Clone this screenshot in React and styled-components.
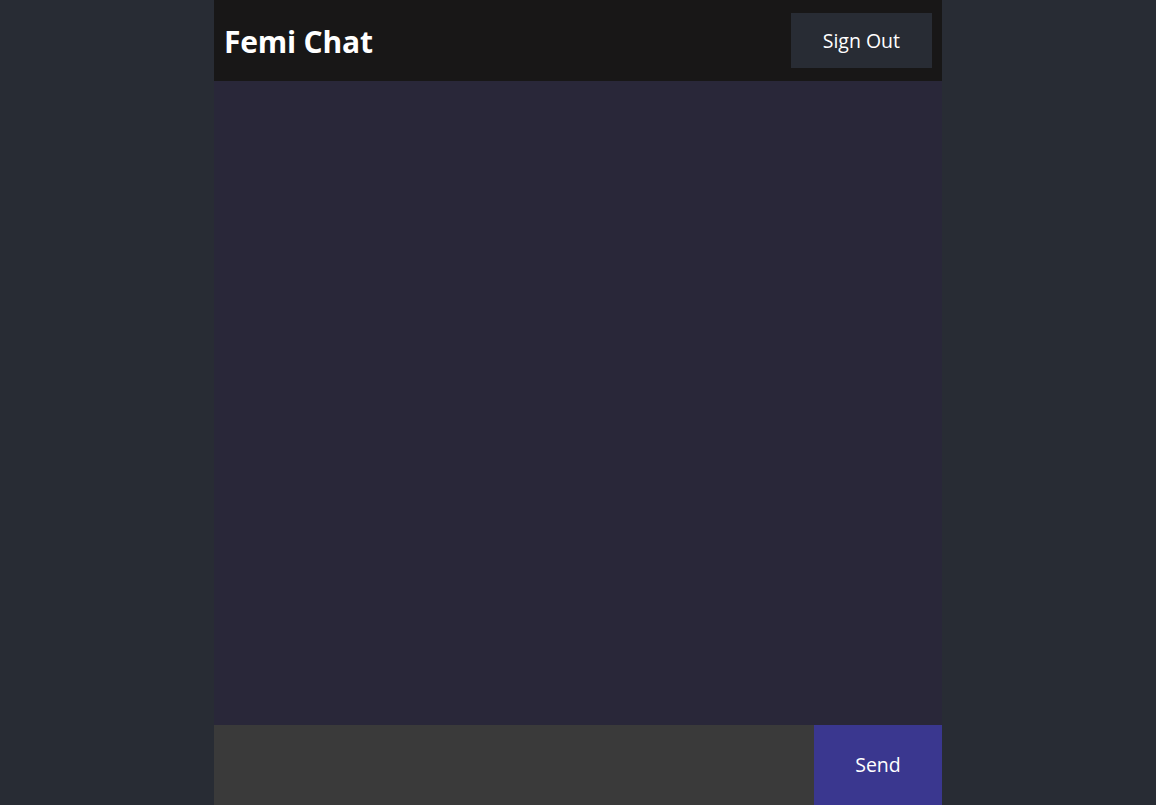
import React, { useState } from 'react';
import styled, { createGlobalStyle } from 'styled-components';

const GlobalStyle = createGlobalStyle`
  body {
    margin: 0;
    background-color: #282c34;
    font-family: "Open Sans", "Noto Sans", sans-serif;
  }
`;

const Shell = styled.div`
  max-width: 728px;
  margin: 0 auto;
  text-align: center;
`;

const Header = styled.header`
  background-color: #181717;
  height: 10vh;
  min-height: 50px;
  color: white;
  display: flex;
  align-items: center;
  justify-content: space-between;
  padding: 10px;
  box-sizing: border-box;
`;

const Title = styled.h1`
  margin: 3px 0 0;
  font-size: 30px;
  font-weight: 700;
  letter-spacing: -0.2px;
`;

const SignOutButton = styled.button`
  background-color: #282c34;
  color: white;
  border: none;
  font-family: inherit;
  font-size: 19.5px;
  padding: 14px 32px;
  cursor: pointer;
`;

const Messages = styled.main`
  height: 80vh;
  background-color: #292739;
  padding: 10px;
  box-sizing: border-box;
  overflow-y: auto;
`;

const Form = styled.form`
  height: 10vh;
  display: flex;
  background-color: #181717;
`;

const MessageInput = styled.input`
  flex: 1;
  min-width: 0;
  background-color: #3a3a3a;
  color: white;
  border: none;
  outline: none;
  font-family: inherit;
  font-size: 24px;
  padding: 0 10px;
`;

const SendButton = styled.button`
  width: 128px;
  background-color: #3a378f;
  color: white;
  border: none;
  font-family: inherit;
  font-size: 19.5px;
  cursor: pointer;
`;

export default function App() {
  const [text, setText] = useState('');

  return (
    <>
      <GlobalStyle />
      <Shell>
        <Header>
          <Title>Femi Chat</Title>
          <SignOutButton>Sign Out</SignOutButton>
        </Header>
        <Messages />
        <Form onSubmit={e => { e.preventDefault(); setText(''); }}>
          <MessageInput value={text} onChange={e => setText(e.target.value)} />
          <SendButton type="submit">Send</SendButton>
        </Form>
      </Shell>
    </>
  );
}
